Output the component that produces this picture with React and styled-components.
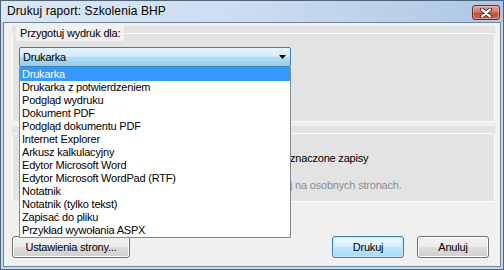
import React from 'react';
import styled, { createGlobalStyle } from 'styled-components';

const GlobalStyle = createGlobalStyle`
  html, body {
    margin: 0;
    padding: 0;
    background: #fff;
  }
  body {
    font-family: "Liberation Sans", Arial, sans-serif;
  }
`;

const Window = styled.div`
  width: 504px;
  height: 270px;
  box-sizing: border-box;
  border: 1px solid #4f6479;
  background: #c4d8ef;
  display: flex;
  flex-direction: column;
`;

const TitleBar = styled.div`
  height: 21px;
  flex: none;
  display: flex;
  align-items: flex-start;
  justify-content: space-between;
  padding: 0 3px 0 6px;
  background: linear-gradient(to right, #dce7f4 0%, #cddef0 45%, #aec7e4 100%);
`;

const Title = styled.div`
  font-size: 12px;
  line-height: 21px;
  letter-spacing: 0.1px;
  color: #000;
`;

const CloseButton = styled.div`
  margin-top: 4px;
  width: 28px;
  height: 15px;
  box-sizing: border-box;
  border: 1px solid #6b2b1f;
  border-radius: 3px;
  background: linear-gradient(#e8a595 0%, #d77a66 45%, #c5503a 55%, #cf6a4f 100%);
  box-shadow: inset 0 0 0 1px rgba(255, 210, 200, 0.45);
  display: flex;
  align-items: center;
  justify-content: center;
`;

const Client = styled.div`
  flex: 1;
  margin: 0 2px 2px;
  border: 1px solid #6d84a0;
  background: #f0f0f0;
  padding: 3px 5px 8px 8px;
  display: flex;
  flex-direction: column;
  font-size: 11px;
  letter-spacing: -0.2px;
  color: #000;
`;

const Group = styled.div`
  background: #e3e3e3;
  margin-top: ${p => p.$top || 0}px;
`;

const Frame = styled.fieldset`
  margin: ${p => p.$offset || 0}px 0 0;
  min-width: 0;
  padding: ${p => p.$pad};
  border: 1px solid #fbfbfb;
  border-radius: 2px;
`;

const Legend = styled.legend`
  padding: 0 4px;
  margin-left: -3px;
  background: #f0f0f0;
  font-size: 11px;
  line-height: 15px;
  color: #000;
`;

const ComboWrap = styled.div`
  position: relative;
  width: 272px;
`;

const Combo = styled.div`
  height: 20px;
  box-sizing: border-box;
  border: 1px solid #3c7fb1;
  border-radius: 2px;
  background: linear-gradient(#e6f4fc 0%, #d4edfa 45%, #b3ddf5 52%, #95cbec 100%);
  display: flex;
  align-items: center;
  justify-content: space-between;
  padding: 0 4px 0 3px;
  line-height: 13px;
`;

const List = styled.ul`
  position: absolute;
  top: 100%;
  left: 0;
  right: 0;
  z-index: 2;
  margin: 0;
  padding: 0;
  list-style: none;
  background: #fff;
  border: 1px solid #828790;
`;

const Item = styled.li`
  height: 13px;
  line-height: 13px;
  padding-left: 2px;
  white-space: nowrap;
  background: ${p => (p.$selected ? '#3399ff' : 'transparent')};
  color: ${p => (p.$selected ? '#fff' : '#000')};
`;

const OptionRow = styled.div`
  display: grid;
  grid-template-columns: 13px 256px auto;
  align-items: center;
  margin-top: ${p => p.$top || 0}px;
  line-height: 13px;
  white-space: nowrap;
  color: ${p => (p.$disabled ? '#8d8d8d' : '#000')};
`;

const Check = styled.span`
  width: 11px;
  height: 11px;
  box-sizing: border-box;
  border: 1px solid #8e8f8f;
  background: #fff;
  visibility: ${p => (p.$hidden ? 'hidden' : 'visible')};
`;

const Lead = styled.span`
  text-align: right;
  overflow: hidden;
`;

const ButtonRow = styled.div`
  margin-top: auto;
  display: flex;
  align-items: center;
  gap: 13px;
  padding-right: 6px;
`;

const Button = styled.button`
  width: ${p => p.$w}px;
  height: 22px;
  margin: 0;
  margin-right: ${p => (p.$push ? 'auto' : '0')};
  padding: 0;
  font-family: "Liberation Sans", Arial, sans-serif;
  font-size: 11px;
  letter-spacing: -0.2px;
  color: #000;
  border-radius: 3px;
  border: 1px solid ${p => (p.$default ? '#3c7fb1' : '#707070')};
  background: ${p =>
    p.$default
      ? 'linear-gradient(#eaf6fd 0%, #d9f0fc 50%, #bee6fd 50%, #a7d9f5 100%)'
      : 'linear-gradient(#f2f2f2 0%, #ebebeb 50%, #dddddd 50%, #cfcfcf 100%)'};
  box-shadow: inset 0 0 0 1px ${p => (p.$default ? '#c4e6f8' : '#fcfcfc')};
`;

const printTargets = [
  'Drukarka',
  'Drukarka z potwierdzeniem',
  'Podgląd wydruku',
  'Dokument PDF',
  'Podgląd dokumentu PDF',
  'Internet Explorer',
  'Arkusz kalkulacyjny',
  'Edytor Microsoft Word',
  'Edytor Microsoft WordPad (RTF)',
  'Notatnik',
  'Notatnik (tylko tekst)',
  'Zapisać do pliku',
  'Przykład wywołania ASPX',
];

const CloseIcon = () => (
  <svg width="14" height="10" viewBox="0 0 14 10">
    <path d="M3 1.5 L11 8.5 M11 1.5 L3 8.5" stroke="#4a1d16" strokeWidth="4.2" strokeLinecap="round" />
    <path d="M3 1.5 L11 8.5 M11 1.5 L3 8.5" stroke="#fff" strokeWidth="2.4" strokeLinecap="round" />
  </svg>
);

const ArrowIcon = () => (
  <svg width="7" height="4" viewBox="0 0 7 4">
    <polygon points="0,0 7,0 3.5,4" fill="#000" />
  </svg>
);

export default function App() {
  return (
    <>
      <GlobalStyle />
      <Window>
        <TitleBar>
          <Title>Drukuj raport: Szkolenia BHP</Title>
          <CloseButton>
            <CloseIcon />
          </CloseButton>
        </TitleBar>
        <Client>
          <Group>
            <Frame $pad="6px 6px 54px 6px">
              <Legend>Przygotuj wydruk dla:</Legend>
              <ComboWrap>
                <Combo>
                  <span>Drukarka</span>
                  <ArrowIcon />
                </Combo>
                <List>
                  {printTargets.map((t, i) => (
                    <Item key={t} $selected={i === 0}>{t}</Item>
                  ))}
                </List>
              </ComboWrap>
            </Frame>
          </Group>
          <Group $top={4}>
            <Frame $offset={7} $pad="18px 8px 9px 8px">
              <OptionRow>
                <Check />
                <Lead>Drukuj tylko za</Lead>
                <span>znaczone zapisy</span>
              </OptionRow>
              <OptionRow $top={14} $disabled>
                <Check $hidden />
                <Lead>Każdy rekord druku</Lead>
                <span>j na osobnych stronach.</span>
              </OptionRow>
            </Frame>
          </Group>
          <ButtonRow>
            <Button $w={118} $push>Ustawienia strony...</Button>
            <Button $w={72} $default>Drukuj</Button>
            <Button $w={72}>Anuluj</Button>
          </ButtonRow>
        </Client>
      </Window>
    </>
  );
}
